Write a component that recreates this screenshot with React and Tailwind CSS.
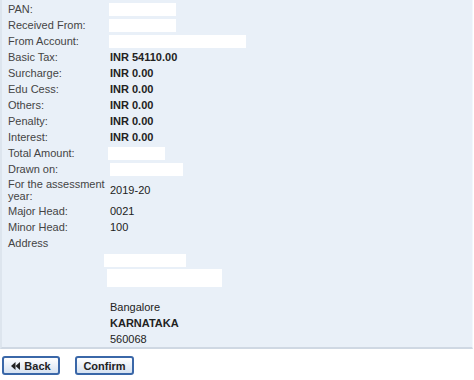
import React from 'react';

const rows = [
  { label: 'PAN:', box: 'w-[67px] -ml-[1px]' },
  { label: 'Received From:', box: 'w-[67px] -ml-[1px]' },
  { label: 'From Account:', box: 'w-[137px] -ml-[1px]' },
  { label: 'Basic Tax:', value: 'INR 54110.00', bold: true },
  { label: 'Surcharge:', value: 'INR 0.00', bold: true },
  { label: 'Edu Cess:', value: 'INR 0.00', bold: true },
  { label: 'Others:', value: 'INR 0.00', bold: true },
  { label: 'Penalty:', value: 'INR 0.00', bold: true },
  { label: 'Interest:', value: 'INR 0.00', bold: true },
  { label: 'Total Amount:', box: 'w-[57px] -ml-[2px]' },
  { label: 'Drawn on:', box: 'w-[73px]' },
  { label: 'For the assessment year:', value: '2019-20', tall: true },
  { label: 'Major Head:', value: '0021' },
  { label: 'Minor Head:', value: '100' },
];

export default function App() {
  return (
    <div className="w-[474px] h-[380px] bg-white text-[11px] leading-[12px] text-[#444]" style={{ fontFamily: '"Liberation Sans", Arial, sans-serif' }}>
      <div className="w-[473px] bg-[#e9f0f8] border-l-2 border-b-2 border-r border-l-[#dde5ee] border-b-[#cfd8e3] border-r-[#f3f7fb] pl-[6px] pt-[1px]">
        {rows.map((r) => (
          <div key={r.label} className={`flex items-center ${r.tall ? 'h-[26px]' : 'h-[16px]'}`}>
            <div className="w-[102px] shrink-0 pr-[4px]">{r.label}</div>
            {r.box ? (
              <div className={`h-[13px] bg-white ${r.box}`} />
            ) : (
              <div className={`text-[#222] ${r.bold ? 'font-bold' : ''}`}>{r.value}</div>
            )}
          </div>
        ))}
        <div className="flex items-center h-[16px]">
          <div>Address</div>
        </div>
        <div className="pl-[96px] pt-[3px]">
          <div className="h-[13px] w-[82px] bg-white" />
        </div>
        <div className="pl-[99px] pt-[2px]">
          <div className="h-[18px] w-[115px] bg-white" />
        </div>
        <div className="pl-[102px] pt-[12px] text-[#222]">
          <div className="h-[16px] flex items-center">Bangalore</div>
          <div className="h-[16px] flex items-center font-bold">KARNATAKA</div>
          <div className="h-[16px] flex items-center">560068</div>
        </div>
      </div>
      <div className="flex gap-[15px] pl-[2px] pt-[7px]">
        <button className="w-[58px] h-[19px] rounded-[3px] border-2 border-[#3a67a8] bg-gradient-to-b from-white to-[#d6e2f1] text-[11px] leading-[12px] font-bold text-[#222] flex items-center justify-center gap-[4px]">
          <svg width="9" height="8" viewBox="0 0 9 8" fill="#222">
            <path d="M4.5 0 L0 4 L4.5 8 Z" />
            <path d="M9 0 L4.5 4 L9 8 Z" />
          </svg>
          Back
        </button>
        <button className="w-[59px] h-[19px] rounded-[3px] border-2 border-[#3a67a8] bg-gradient-to-b from-white to-[#d6e2f1] text-[11px] leading-[12px] font-bold text-[#222] flex items-center justify-center">
          Confirm
        </button>
      </div>
    </div>
  );
}
